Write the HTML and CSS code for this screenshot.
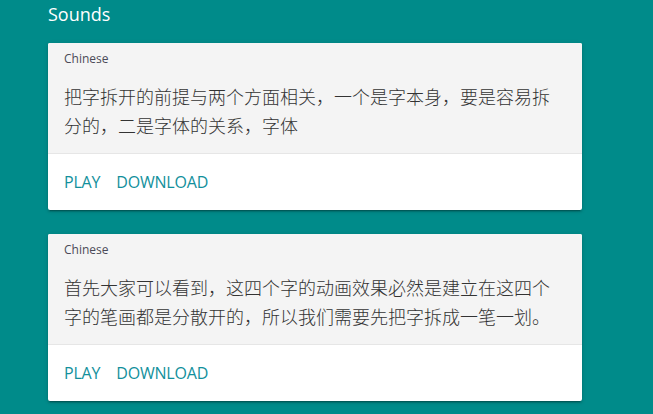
FILE: index.html
```html
<!DOCTYPE html>
<html lang="zh-CN">
<head>
<meta charset="utf-8">
<title>Sounds</title>
<link rel="stylesheet" href="styles.css">
</head>
<body>
<main class="page">
  <h1 class="page-title">Sounds</h1>
  <section class="card">
    <div class="card-body">
      <div class="card-label">Chinese</div>
      <p class="card-text">把字拆开的前提与两个方面相关，一个是字本身，要是容易拆分的，二是字体的关系，字体</p>
    </div>
    <div class="card-actions">
      <a class="action" href="#">PLAY</a>
      <a class="action" href="#">DOWNLOAD</a>
    </div>
  </section>
  <section class="card">
    <div class="card-body">
      <div class="card-label">Chinese</div>
      <p class="card-text">首先大家可以看到，这四个字的动画效果必然是建立在这四个字的笔画都是分散开的，所以我们需要先把字拆成一笔一划。</p>
    </div>
    <div class="card-actions">
      <a class="action" href="#">PLAY</a>
      <a class="action" href="#">DOWNLOAD</a>
    </div>
  </section>
</main>
</body>
</html>
```
FILE: styles.css
```css
html, body {
  margin: 0;
  padding: 0;
  background: #008b8a;
  height: 100%;
  overflow: hidden;
}

.page {
  width: 534px;
  padding: 2px 0 0 48px;
  display: flex;
  flex-direction: column;
  gap: 24px;
  font-family: "Open Sans", "Noto Sans CJK SC", sans-serif;
}

.page-title {
  margin: 0 0 -7px;
  font-size: 18px;
  line-height: 24px;
  font-weight: 400;
  color: #ffffff;
}

.card {
  background: #ffffff;
  border-radius: 2px;
  box-shadow: 0 2px 2px rgba(0,0,0,0.14), 0 3px 1px -2px rgba(0,0,0,0.2), 0 1px 5px rgba(0,0,0,0.12);
  overflow: hidden;
}

.card-body {
  background: #f4f4f4;
  padding: 8px 16px 13px;
  border-bottom: 1px solid #e6e6e6;
}

.card-label {
  font-size: 12px;
  line-height: 16px;
  color: #4a4a58;
}

.card-text {
  margin: 15px 0 0;
  font-family: "Noto Sans CJK SC", "Open Sans", sans-serif;
  font-size: 18px;
  font-weight: 300;
  line-height: 29px;
  color: #333333;
}

.card-actions {
  display: flex;
  gap: 16px;
  padding: 16px;
}

.action {
  font-size: 16px;
  line-height: 24px;
  letter-spacing: -0.2px;
  color: #12909c;
  text-decoration: none;
}
```
